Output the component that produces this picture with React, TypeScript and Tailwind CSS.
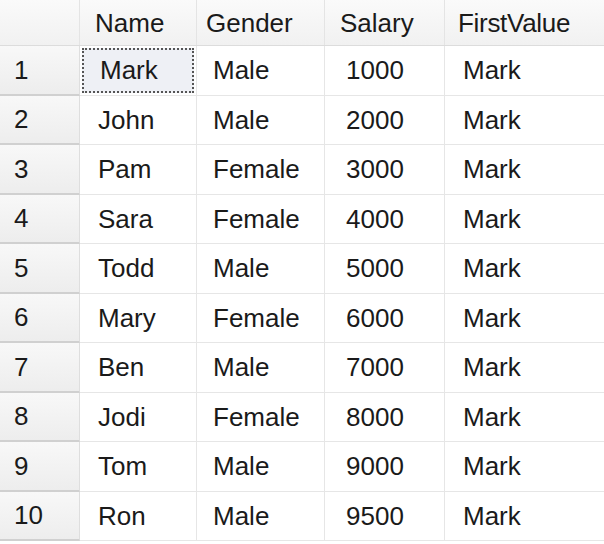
import React from "react";

const rows = [
  ["Mark", "Male", "1000"],
  ["John", "Male", "2000"],
  ["Pam", "Female", "3000"],
  ["Sara", "Female", "4000"],
  ["Todd", "Male", "5000"],
  ["Mary", "Female", "6000"],
  ["Ben", "Male", "7000"],
  ["Jodi", "Female", "8000"],
  ["Tom", "Male", "9000"],
  ["Ron", "Male", "9500"],
];

const cols = "grid grid-cols-[80px_117px_128px_120px_1fr]";

const App: React.FC = () => {
  return (
    <div
      className="w-[604px] h-[544px] overflow-hidden bg-white text-[26px] leading-none text-[#1a1a1a]"
      style={{ fontFamily: '"Liberation Sans", Arial, sans-serif' }}
    >
      {/* Column headers */}
      <div className={`${cols} h-[46px] bg-gradient-to-b from-[#fafafa] to-[#f1f1f1] border-b border-[#dcdcdc]`}>
        <div className="border-r border-[#e4e4e4]"></div>
        <div className="flex items-center pl-[15px] border-r border-[#e4e4e4]">Name</div>
        <div className="flex items-center pl-[9px] border-r border-[#e4e4e4]">Gender</div>
        <div className="flex items-center pl-[15px] border-r border-[#e4e4e4]">Salary</div>
        <div className="flex items-center pl-[13px] tracking-[-0.3px]">FirstValue</div>
      </div>

      {/* Data rows */}
      {rows.map(([name, gender, salary], i) => (
        <div key={i} className={`${cols} h-[49.5px]`}>
          <div className="flex items-center pl-[14px] bg-gradient-to-b from-[#f8f8f8] to-[#ededed] border-b-2 border-[#d0d0d0] border-r border-r-[#dedede]">
            {i + 1}
          </div>
          <div className="border-b border-r border-[#e6e6e6] p-[2px]">
            {i === 0 ? (
              <div className="h-full flex items-center pl-[16px] bg-[#eef0f5] border-2 border-dotted border-[#555]">
                {name}
              </div>
            ) : (
              <div className="h-full flex items-center pl-[16px]">{name}</div>
            )}
          </div>
          <div className="flex items-center pl-[16px] border-b border-r border-[#e6e6e6]">{gender}</div>
          <div className="flex items-center pl-[21px] border-b border-r border-[#e6e6e6]">{salary}</div>
          <div className="flex items-center pl-[18px] border-b border-[#e6e6e6]">Mark</div>
        </div>
      ))}
    </div>
  );
};

export default App;
